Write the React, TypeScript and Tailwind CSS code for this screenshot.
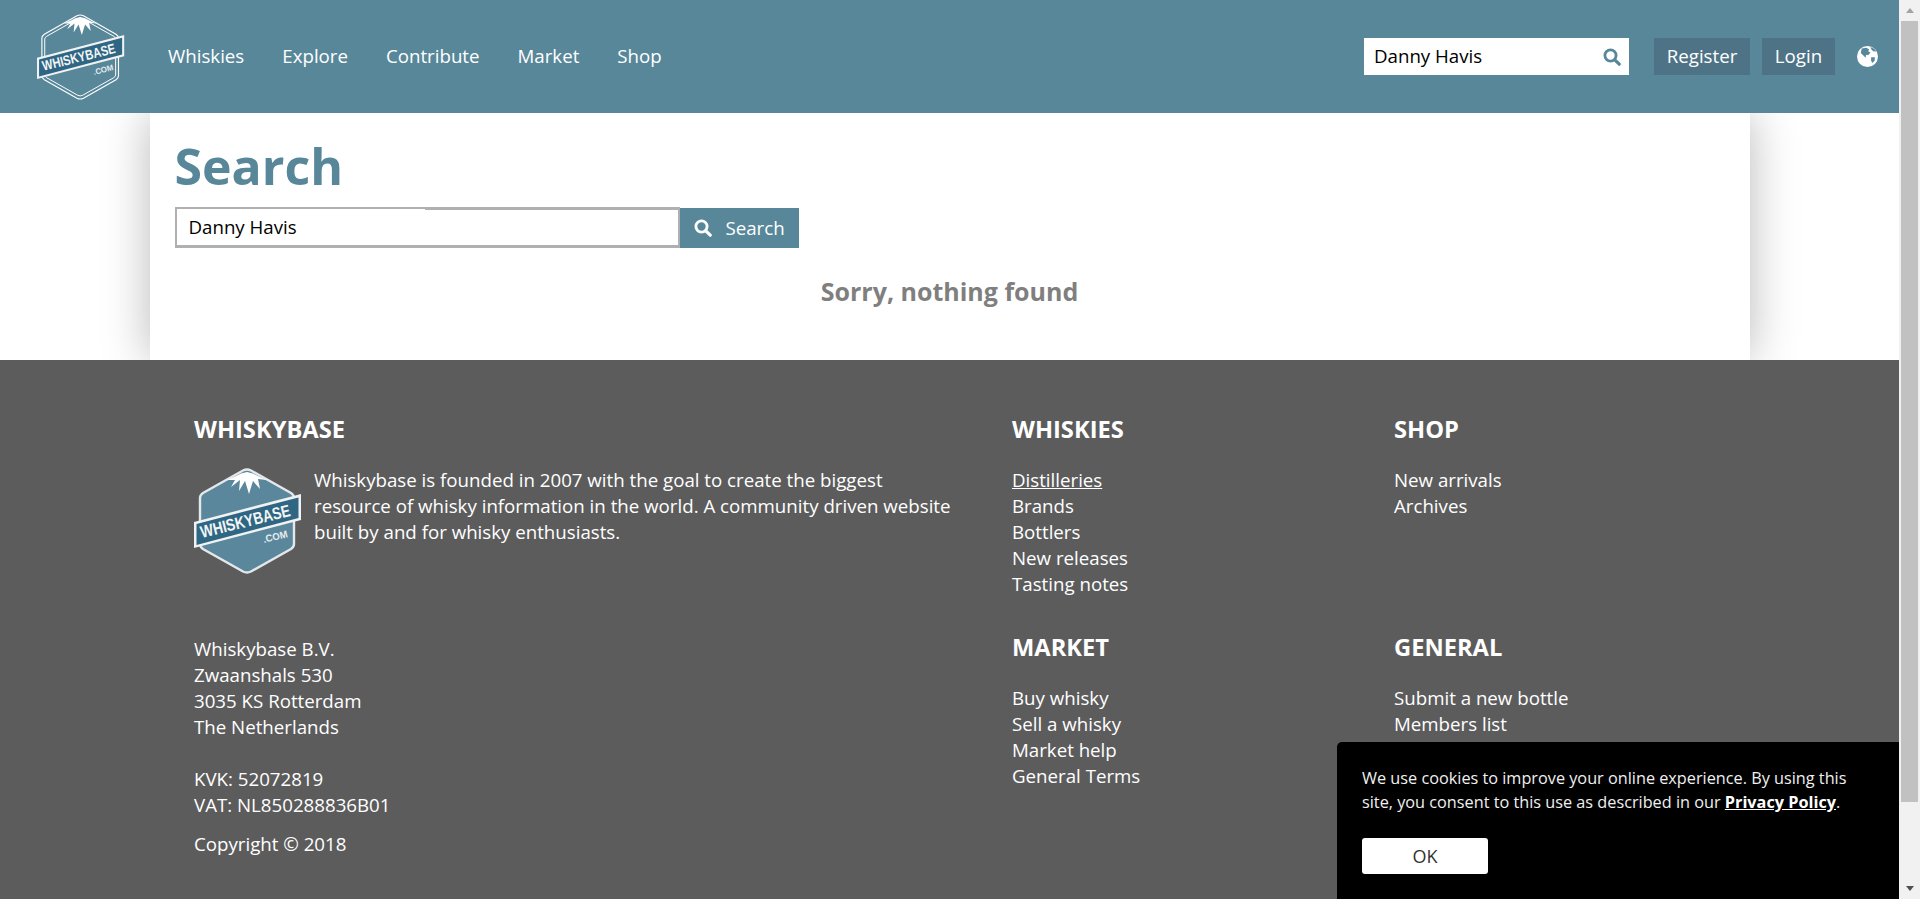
const navItems = ["Whiskies", "Explore", "Contribute", "Market", "Shop"];

const footerGroups = [
  { title: "WHISKIES", links: ["Distilleries", "Brands", "Bottlers", "New releases", "Tasting notes"] },
  { title: "SHOP", links: ["New arrivals", "Archives"] },
  { title: "MARKET", links: ["Buy whisky", "Sell a whisky", "Market help", "General Terms"] },
  { title: "GENERAL", links: ["Submit a new bottle", "Members list"] },
];

const SearchIcon = ({ className }: { className: string }) => (
  <svg viewBox="0 0 18 18" className={className} fill="none" stroke="currentColor">
    <circle cx="7.5" cy="7.5" r="5.6" strokeWidth="2.8" />
    <path d="M11.8 11.8 16.2 16.2" strokeWidth="3.2" strokeLinecap="round" />
  </svg>
);

const GlobeIcon = () => (
  <svg viewBox="0 0 20 20" className="h-[21px] w-[21px]">
    <circle cx="10" cy="10" r="10" fill="#fff" />
    <path d="M4.5 2.4 8.8 1.6 11.5 3 10.7 5 12.8 6.3 10.6 8.8 8.6 8.4 8.2 11.2 6.3 9.2 3.6 6.6Z" fill="#58879a" />
    <path d="M12.6 1 16.4 2.6 18.4 5.2 15.4 5 13.8 3.4Z" fill="#58879a" />
    <path d="M13.5 10.8 17 10.6 16.8 13.8 14.8 16.2 13.4 14Z" fill="#58879a" />
  </svg>
);

const Logo = ({ solid, className }: { solid?: boolean; className: string }) => (
  <svg viewBox="0 0 108 108" className={`overflow-visible ${className}`}>
    <path
      d="M49 3.5Q53 1.5 57 3.5L97 26Q100 28 100 31L100 77Q100 80 97 82L57 104.5Q53 106.5 49 104.5L9 82Q6 80 6 77L6 31Q6 28 9 26Z"
      fill={solid ? "#5a879b" : "none"}
      stroke={solid ? "#e4e8ea" : "#fff"}
      strokeWidth={solid ? 2.4 : 1.4}
    />
    {!solid && (
      <path
        d="M50 7Q53 5.5 56 7L94 28.5Q96.500 30 96.500 32L96.500 76Q96.500 78 94 79.500L56 101Q53 102.500 50 101L12 79.500Q9.500 78 9.500 76L9.500 32Q9.500 30 12 28.500Z"
        fill="none"
        stroke="#fff"
        strokeWidth="1.2"
      />
    )}
    <path
      d="M33 13 41 9.500 47 6.500 53 5 59 6.500 66 10 73 13 64 12 66 22 59 14 55 27 51 14 45 24 46 13 37 20 41 13Z"
      fill="#fff"
    />
    <path d="M0 55 107 27 107 53 0 81Z" fill="#f0f2f3" />
    <path d="M2.500 57 104.500 30.500 104.500 51 2.500 78Z" fill="#2f6683" />
    <text
      x="8"
      y="71"
      transform="rotate(-14 8 71)"
      fontFamily="'Liberation Sans', sans-serif"
      fontWeight="700"
      fontSize="17"
      fill="#f2f5f6"
      textLength="92"
      lengthAdjust="spacingAndGlyphs"
    >
      WHISKYBASE
    </text>
    <text
      x="70"
      y="76"
      transform="rotate(-14 70 76)"
      fontFamily="'Liberation Sans', sans-serif"
      fontWeight="700"
      fontSize="10"
      fill="#e6ecef"
      textLength="25"
      lengthAdjust="spacingAndGlyphs"
    >
      .COM
    </text>
  </svg>
);

const Scrollbar = () => (
  <div className="flex h-[899px] w-[21px] shrink-0 flex-col items-center bg-[#f1f1f1]">
    <div className="flex h-[21px] items-center justify-center">
      <div className="h-0 w-0 border-x-[4px] border-b-[5px] border-x-transparent border-b-[#a3a3a3]" />
    </div>
    <div className="h-[781px] w-[17px] bg-[#c1c1c1]" />
    <div className="flex flex-1 items-end justify-center pb-[8px]">
      <div className="h-0 w-0 border-x-[4px] border-t-[5px] border-x-transparent border-t-[#505050]" />
    </div>
  </div>
);

export default function App() {
  return (
    <div className="relative flex h-[899px] overflow-hidden bg-white font-['Open_Sans',sans-serif] text-[18.7px] text-black">
      <div className="min-w-0 flex-1">
        <header className="relative z-10 flex h-[113px] items-center bg-[#58879a] text-white">
          <div className="ml-[37px] flex h-[88px] w-[88px]">
            <Logo className="h-[88px] w-[88px]" />
          </div>
          <nav className="mb-[2px] ml-[43px] flex gap-[38px]">
            {navItems.map((item) => (
              <a key={item} className="leading-[26px]">
                {item}
              </a>
            ))}
          </nav>
          <div className="ml-auto flex items-center pr-[21px]">
            <div className="flex h-[37px] w-[265px] items-center justify-between bg-white pl-[10px] pr-[8px] text-black">
              <span>Danny Havis</span>
              <SearchIcon className="h-[18px] w-[18px] text-[#58879a]" />
            </div>
            <a className="ml-[25px] flex h-[37px] w-[96px] items-center justify-center bg-[#4e7386]">Register</a>
            <a className="ml-[12px] flex h-[37px] w-[73px] items-center justify-center bg-[#4e7386]">Login</a>
            <div className="ml-[22px]">
              <GlobeIcon />
            </div>
          </div>
        </header>

        <main className="mx-auto h-[247px] w-[1600px] bg-white px-[25px] shadow-[0_0_45px_rgba(0,0,0,0.28)]">
          <h1 className="pt-[19px] text-[50px] font-bold leading-[68px] text-[#58879a]">Search</h1>
          <div className="mt-[7px] flex">
            <div className="relative flex h-[41px] w-[505px] items-center border-x-2 border-b-[3px] border-t-2 border-[#b0b0b0] pl-[12px]">
              Danny Havis
              <div className="absolute left-[248px] right-0 top-0 h-px bg-[#b0b0b0]" />
            </div>
            <button className="mt-px flex h-[40px] w-[119px] items-center gap-[14px] bg-[#58879a] pl-[14px] text-white">
              <SearchIcon className="h-[18px] w-[18px]" />
              Search
            </button>
          </div>
          <p className="mt-[27px] text-center text-[25px] font-bold leading-[32px] text-[#7f7f7f]">Sorry, nothing found</p>
        </main>

        <footer className="relative z-10 flex h-[539px] bg-[#5c5c5c] pl-[194px] pt-[54px] text-white">
          <div className="w-[818px]">
            <h3 className="text-[23.7px] font-bold leading-[30px]">WHISKYBASE</h3>
            <div className="mt-[23px] flex">
              <Logo solid className="h-[108px] w-[108px] shrink-0" />
              <p className="ml-[12px] w-[650px] leading-[26px]">
                Whiskybase is founded in 2007 with the goal to create the biggest resource of whisky information in the world. A community driven website built by and for whisky enthusiasts.
              </p>
            </div>
            <div className="mt-[61px] leading-[26px]">
              <p>Whiskybase B.V.</p>
              <p>Zwaanshals 530</p>
              <p>3035 KS Rotterdam</p>
              <p>The Netherlands</p>
              <p className="mt-[26px]">KVK: 52072819</p>
              <p>VAT: NL850288836B01</p>
              <p className="mt-[13px]">Copyright © 2018</p>
            </div>
          </div>
          <div className="grid w-[763px] grid-cols-[382px_381px] content-start gap-y-[25px]">
            {footerGroups.map((group) => (
              <section key={group.title} className="min-h-[193px]">
                <h3 className="text-[23.7px] font-bold leading-[30px]">{group.title}</h3>
                <ul className="mt-[23px] leading-[26px]">
                  {group.links.map((link) => (
                    <li key={link} className={link === "Distilleries" ? "underline" : ""}>
                      {link}
                    </li>
                  ))}
                </ul>
              </section>
            ))}
          </div>
        </footer>
      </div>

      <Scrollbar />

      <aside className="absolute bottom-0 right-[21px] z-20 h-[157px] w-[562px] rounded-tl-[5px] bg-black pl-[25px] pt-[24px] text-[16.25px] leading-[24px] text-[#f0f0f0]">
        <p className="w-[500px]">
          We use cookies to improve your online experience. By using this site, you consent to this use as described in our{" "}
          <a className="font-bold text-white underline">Privacy Policy</a>.
        </p>
        <button className="mt-[24px] h-[36px] w-[126px] rounded-[3px] bg-white text-[18px] text-[#333]">OK</button>
      </aside>
    </div>
  );
}
